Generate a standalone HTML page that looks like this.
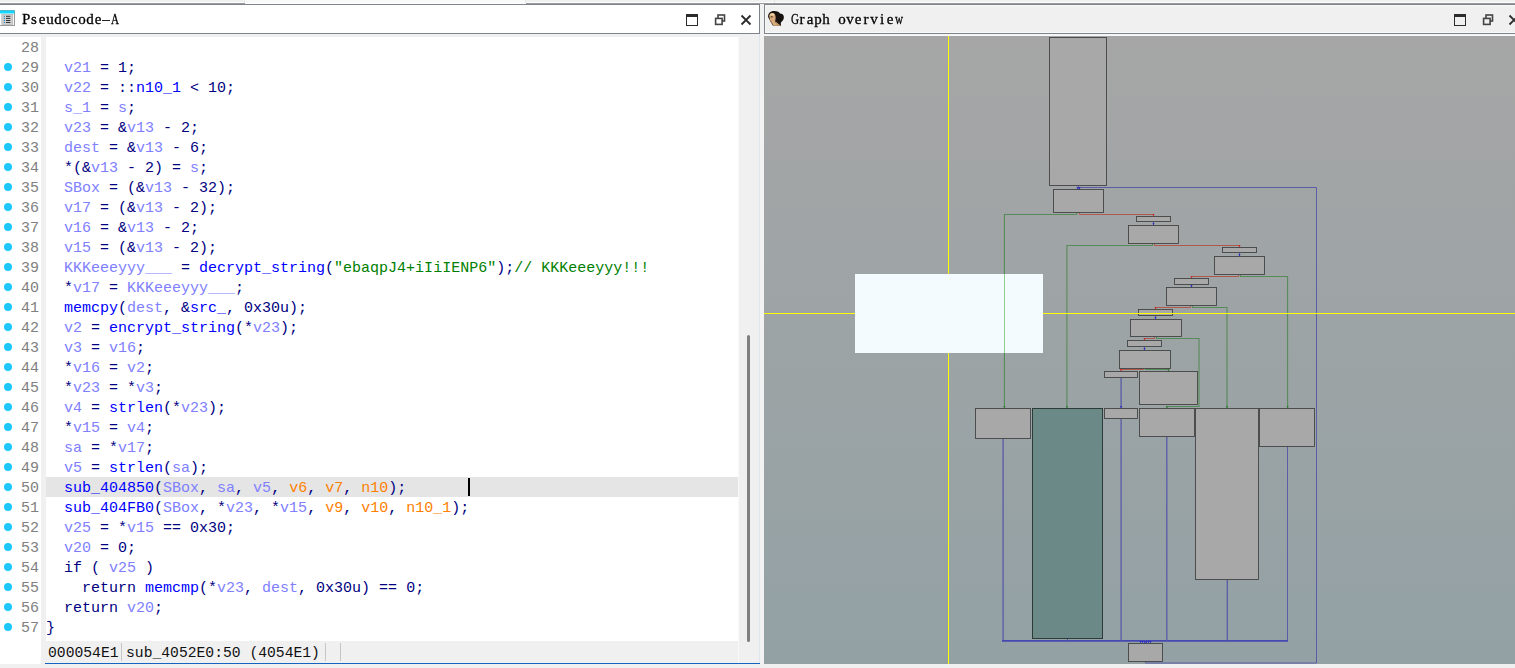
<!DOCTYPE html>
<html>
<head>
<meta charset="utf-8">
<title>Pseudocode-A</title>
<style>
html,body{margin:0;padding:0;}
body{width:1515px;height:668px;overflow:hidden;background:#f0f0f0;position:relative;font-family:"Liberation Mono",monospace;}
.abs{position:absolute;}
/* top strip */
#topstrip{left:0;top:0;width:1515px;height:4px;background:#f0f0f0;}
#toptab{left:245px;top:0;width:281px;height:4px;background:#f9f9f9;border-bottom:0;box-shadow:inset 0 -1px 0 #fff;}
/* headers */
#hdrL{left:0;top:4px;width:759px;height:29px;background:#fff;border-top:1px solid #7f838a;border-bottom:1px solid #7f838a;border-right:1px solid #7f838a;box-sizing:content-box;height:28px;}
#hdrR{left:764px;top:4px;width:751px;height:28px;background:#f0f0f0;box-shadow:inset 0 0 0 1px #f9f9f9;border-top:1px solid #7f838a;border-bottom:1px solid #7f838a;border-left:1px solid #7f838a;}
.title{font-family:"Liberation Serif",serif;font-size:15px;color:#000;line-height:20px;white-space:nowrap;will-change:transform;}
.title b{-webkit-text-stroke:0.3px #000;display:inline-block;width:8px;text-align:center;font-weight:normal;}
.title b.w{transform:scaleX(.74);}
/* code */
#gutter{left:0;top:37px;width:41px;height:627px;background:#fff;}
#codebg{left:46px;top:37px;width:692px;height:604px;background:#fff;}
#track{left:738px;top:37px;width:21px;height:626px;background:#f0f0f0;border-left:1px solid #f8f8f8;box-sizing:border-box;}
#thumb{left:747px;top:335px;width:3px;height:307px;background:#808080;border-radius:2px;}
#code{left:0;top:37px;width:739px;}
.ln{position:relative;height:20px;line-height:24px;white-space:pre;font-size:15px;}
.ln.hl .code{background:#e5e5e5;}
.num{position:absolute;left:21px;top:0;color:#808080;}
.code{position:absolute;left:46px;top:0;width:692px;height:20px;}
.dot{position:absolute;left:3.7px;top:5.7px;width:8.6px;height:8.6px;border-radius:50%;background:#1ec8ff;}
.v{color:#8080ff}.f{color:#0000ff}.g{color:#0000ff}.p{color:#000080}.s{color:#008000}.o{color:#ff8000}
#caret{left:468px;top:478px;width:2px;height:18px;background:#000;}
/* status */
#status{left:46px;top:641px;width:692px;height:22px;background:#f0f0f0;font-size:14.7px;line-height:24px;color:#111;white-space:pre;}
.sep{position:absolute;top:2px;width:1px;height:18px;background:#c6c6c6;}
#blueline{left:45px;top:662.6px;width:715px;height:1.3px;background:#1565c0;}
#splitter{left:760px;top:4px;width:4px;height:660px;background:#f2f2f2;}
#splitln{left:759px;top:34px;width:1px;height:630px;background:#dfe5ee;}
</style>
</head>
<body>
<div class="abs" id="topstrip"></div>
<div class="abs" style="left:0;top:2px;width:1515px;height:1px;background:#fdfdfd;"></div>
<div class="abs" style="left:0;top:3px;width:1515px;height:1px;background:#9a9a9a;"></div>
<div class="abs" id="toptab"></div>
<div class="abs" style="left:244px;top:0;width:1px;height:3px;background:#e6e6e6;"></div>
<div class="abs" style="left:525px;top:0;width:1px;height:3px;background:#e6e6e6;"></div>
<div class="abs" style="left:774px;top:0;width:1px;height:3px;background:#e6e6e6;"></div>

<div class="abs" id="hdrL"></div>
<div class="abs" id="hdrR"></div>
<div class="abs" style="left:764px;top:34px;width:751px;height:2px;background:#f6f6f6;"></div>
<div class="abs" id="splitter"></div>
<div class="abs" id="splitln"></div>
<div class="abs title" style="left:22px;top:9px;"><b>P</b><b>s</b><b>e</b><b>u</b><b>d</b><b>o</b><b>c</b><b>o</b><b>d</b><b>e</b><b>–</b><b class="w">A</b></div>
<div class="abs title" style="left:790px;top:9px;"><b class="w">G</b><b>r</b><b>a</b><b>p</b><b>h</b><b>&nbsp;</b><b>o</b><b>v</b><b>e</b><b>r</b><b>v</b><b>i</b><b>e</b><b class="w">w</b></div>

<div class="abs" id="gutter"></div>
<div class="abs" id="codebg"></div>
<div class="abs" id="track"></div>
<div class="abs" id="thumb"></div>
<div class="abs" id="code">
<div class="ln"><span class="num">28</span><span class="code"></span></div>
<div class="ln"><i class="dot"></i><span class="num">29</span><span class="code">  <span class="v">v21</span><span class="p"> = 1;</span></span></div>
<div class="ln"><i class="dot"></i><span class="num">30</span><span class="code">  <span class="v">v22</span><span class="p"> = ::</span><span class="g">n10_1</span><span class="p"> &lt; 10;</span></span></div>
<div class="ln"><i class="dot"></i><span class="num">31</span><span class="code">  <span class="v">s_1</span><span class="p"> = </span><span class="v">s</span><span class="p">;</span></span></div>
<div class="ln"><i class="dot"></i><span class="num">32</span><span class="code">  <span class="v">v23</span><span class="p"> = &amp;</span><span class="v">v13</span><span class="p"> - 2;</span></span></div>
<div class="ln"><i class="dot"></i><span class="num">33</span><span class="code">  <span class="v">dest</span><span class="p"> = &amp;</span><span class="v">v13</span><span class="p"> - 6;</span></span></div>
<div class="ln"><i class="dot"></i><span class="num">34</span><span class="code">  <span class="p">*(&amp;</span><span class="v">v13</span><span class="p"> - 2) = </span><span class="v">s</span><span class="p">;</span></span></div>
<div class="ln"><i class="dot"></i><span class="num">35</span><span class="code">  <span class="v">SBox</span><span class="p"> = (&amp;</span><span class="v">v13</span><span class="p"> - 32);</span></span></div>
<div class="ln"><i class="dot"></i><span class="num">36</span><span class="code">  <span class="v">v17</span><span class="p"> = (&amp;</span><span class="v">v13</span><span class="p"> - 2);</span></span></div>
<div class="ln"><i class="dot"></i><span class="num">37</span><span class="code">  <span class="v">v16</span><span class="p"> = &amp;</span><span class="v">v13</span><span class="p"> - 2;</span></span></div>
<div class="ln"><i class="dot"></i><span class="num">38</span><span class="code">  <span class="v">v15</span><span class="p"> = (&amp;</span><span class="v">v13</span><span class="p"> - 2);</span></span></div>
<div class="ln"><i class="dot"></i><span class="num">39</span><span class="code">  <span class="v">KKKeeeyyy___</span><span class="p"> = </span><span class="f">decrypt_string</span><span class="p">(</span><span class="s">"ebaqpJ4+iIiIENP6"</span><span class="p">);</span><span class="s">// KKKeeeyyy!!!</span></span></div>
<div class="ln"><i class="dot"></i><span class="num">40</span><span class="code">  <span class="p">*</span><span class="v">v17</span><span class="p"> = </span><span class="v">KKKeeeyyy___</span><span class="p">;</span></span></div>
<div class="ln"><i class="dot"></i><span class="num">41</span><span class="code">  <span class="f">memcpy</span><span class="p">(</span><span class="v">dest</span><span class="p">, &amp;</span><span class="g">src_</span><span class="p">, 0x30u);</span></span></div>
<div class="ln"><i class="dot"></i><span class="num">42</span><span class="code">  <span class="v">v2</span><span class="p"> = </span><span class="f">encrypt_string</span><span class="p">(*</span><span class="v">v23</span><span class="p">);</span></span></div>
<div class="ln"><i class="dot"></i><span class="num">43</span><span class="code">  <span class="v">v3</span><span class="p"> = </span><span class="v">v16</span><span class="p">;</span></span></div>
<div class="ln"><i class="dot"></i><span class="num">44</span><span class="code">  <span class="p">*</span><span class="v">v16</span><span class="p"> = </span><span class="v">v2</span><span class="p">;</span></span></div>
<div class="ln"><i class="dot"></i><span class="num">45</span><span class="code">  <span class="p">*</span><span class="v">v23</span><span class="p"> = *</span><span class="v">v3</span><span class="p">;</span></span></div>
<div class="ln"><i class="dot"></i><span class="num">46</span><span class="code">  <span class="v">v4</span><span class="p"> = </span><span class="f">strlen</span><span class="p">(*</span><span class="v">v23</span><span class="p">);</span></span></div>
<div class="ln"><i class="dot"></i><span class="num">47</span><span class="code">  <span class="p">*</span><span class="v">v15</span><span class="p"> = </span><span class="v">v4</span><span class="p">;</span></span></div>
<div class="ln"><i class="dot"></i><span class="num">48</span><span class="code">  <span class="v">sa</span><span class="p"> = *</span><span class="v">v17</span><span class="p">;</span></span></div>
<div class="ln"><i class="dot"></i><span class="num">49</span><span class="code">  <span class="v">v5</span><span class="p"> = </span><span class="f">strlen</span><span class="p">(</span><span class="v">sa</span><span class="p">);</span></span></div>
<div class="ln hl"><i class="dot"></i><span class="num">50</span><span class="code">  <span class="f">sub_404850</span><span class="p">(</span><span class="v">SBox</span><span class="p">, </span><span class="v">sa</span><span class="p">, </span><span class="v">v5</span><span class="p">, </span><span class="o">v6</span><span class="p">, </span><span class="o">v7</span><span class="p">, </span><span class="o">n10</span><span class="p">);</span></span></div>
<div class="ln"><i class="dot"></i><span class="num">51</span><span class="code">  <span class="f">sub_404FB0</span><span class="p">(</span><span class="v">SBox</span><span class="p">, *</span><span class="v">v23</span><span class="p">, *</span><span class="v">v15</span><span class="p">, </span><span class="o">v9</span><span class="p">, </span><span class="o">v10</span><span class="p">, </span><span class="o">n10_1</span><span class="p">);</span></span></div>
<div class="ln"><i class="dot"></i><span class="num">52</span><span class="code">  <span class="v">v25</span><span class="p"> = *</span><span class="v">v15</span><span class="p"> == 0x30;</span></span></div>
<div class="ln"><i class="dot"></i><span class="num">53</span><span class="code">  <span class="v">v20</span><span class="p"> = 0;</span></span></div>
<div class="ln"><i class="dot"></i><span class="num">54</span><span class="code">  <span class="p">if ( </span><span class="v">v25</span><span class="p"> )</span></span></div>
<div class="ln"><i class="dot"></i><span class="num">55</span><span class="code">  <span class="p">  return </span><span class="f">memcmp</span><span class="p">(*</span><span class="v">v23</span><span class="p">, </span><span class="v">dest</span><span class="p">, 0x30u) == 0;</span></span></div>
<div class="ln"><i class="dot"></i><span class="num">56</span><span class="code">  <span class="p">return </span><span class="v">v20</span><span class="p">;</span></span></div>
<div class="ln"><i class="dot"></i><span class="num">57</span><span class="code"><span class="p">}</span></span></div>
</div>
<div class="abs" id="caret"></div>
<div class="abs" id="status"><span style="position:absolute;left:2px;">000054E1</span><span style="position:absolute;left:80px;">sub_4052E0:50 (4054E1)</span><i class="sep" style="left:75px"></i><i class="sep" style="left:279px"></i><i class="sep" style="left:294px"></i></div>
<div class="abs" id="blueline"></div>

<svg class="abs" style="left:0;top:0" width="1515" height="668" viewBox="0 0 1515 668">
<defs>
<linearGradient id="gbg" x1="0" y1="0" x2="0" y2="1"><stop offset="0" stop-color="#a6a6a6"/><stop offset="1" stop-color="#93a1a5"/></linearGradient>
<style>
.bk{fill:#a8a8a8;stroke:#444;stroke-width:.9}
.bkt{fill:#6b8986;stroke:#2c3a38;stroke-width:1}
.eg{fill:none;stroke:#578a59;stroke-width:1.1}
.er{fill:none;stroke:#b0584e;stroke-width:1}
.eb{fill:none;stroke:#5b5ea6;stroke-width:1}
.eb3{fill:none;stroke:#5b5ea6;stroke-width:1.35}
.eb2{fill:none;stroke:#4648b2;stroke-width:1.7}
</style>
</defs>
<!-- graph bg -->
<rect x="764" y="36" width="751" height="628" fill="url(#gbg)"/>
<g>
<polyline class="eb" points="1078.5,185.5 1078.5,189.5"/>
<polyline class="eb" points="1145.5,661.5 1145.5,663 1316.5,663 1316.5,187.5 1079.5,187.5 1079.5,189.5"/>
<polyline class="eg" points="1077.5,212.5 1076.5,214.5 1004.4,214.5 1004.4,408.5"/>
<polyline class="er" points="1079.5,212.5 1079.5,214.5 1153.5,214.5 1153.5,216.5"/>
<polyline class="eb" points="1153.5,221.5 1153.5,225.5"/>
<polyline class="eg" points="1152.5,243.5 1152.5,245.5 1066.9,245.5 1066.9,408.5"/>
<polyline class="er" points="1154.5,243.5 1154.5,245.5 1239.5,245.5 1239.5,247.5"/>
<polyline class="eb" points="1239.5,252.5 1239.5,256.5"/>
<polyline class="er" points="1238.5,274.5 1238.5,276.5 1191.5,276.5 1191.5,278.5"/>
<polyline class="eg" points="1240.5,274.5 1240.5,276.5 1287.6,276.5 1287.6,408.5"/>
<polyline class="eb" points="1191.5,284.5 1191.5,287.5"/>
<polyline class="er" points="1190.5,305.5 1190.5,307.5 1155.5,307.5 1155.5,309.5"/>
<polyline class="eg" points="1192.5,305.5 1192.5,307.5 1227,307.5 1227,408.5"/>
<polyline class="eb" points="1155.5,315.5 1155.5,319.5"/>
<polyline class="er" points="1154.5,336.5 1154.5,338.5 1144.5,338.5 1144.5,340.5"/>
<polyline class="eg" points="1156.5,336.5 1156.5,338.5 1199,338.5 1199,406.5 1166.9,406.5 1166.9,408.5"/>
<polyline class="eb" points="1144.5,346.5 1144.5,350.5"/>
<polyline class="er" points="1143.5,368.5 1143.5,369.5 1121,369.5 1121,371.5"/>
<polyline class="eg" points="1145.5,368.5 1145.5,369.5 1168.5,369.5 1168.5,371.5"/>
<polyline class="eb3" points="1121.1,377.5 1121.1,408.5"/>
<polyline class="eb3" points="1003.1,438.5 1003.1,640.8"/>
<polyline class="eb" points="1287.5,640.8 1287.5,446.5"/>
<polyline class="eb2" points="1002,640.8 1288,640.8"/>
<polyline class="eb" points="1067.5,638.5 1067.5,640.5"/>
<polyline class="eb3" points="1121.1,418.5 1121.1,640.5"/>
<polyline class="eb3" points="1166.8,436.5 1166.8,640.5"/>
<polyline class="eb3" points="1227.3,579.5 1227.3,640.5"/>
<polyline class="eb" points="1145.5,640.5 1145.5,643.5"/>
</g>
<g>
<rect class="bk" x="1049.5" y="37.5" width="57" height="148"/>
<rect class="bk" x="1053.5" y="189.5" width="50" height="23"/>
<rect class="bk" x="1136.5" y="216.5" width="34" height="5"/>
<rect class="bk" x="1128.5" y="225.5" width="50" height="18"/>
<rect class="bk" x="1222.5" y="247.5" width="34" height="5"/>
<rect class="bk" x="1214.5" y="256.5" width="50" height="18"/>
<rect class="bk" x="1174.5" y="278.5" width="34" height="6"/>
<rect class="bk" x="1166.5" y="287.5" width="50" height="18"/>
<rect class="bk" x="1138.5" y="309.5" width="34" height="6"/>
<rect class="bk" x="1130.5" y="319.5" width="51" height="17"/>
<rect class="bk" x="1127.5" y="340.5" width="34" height="6"/>
<rect class="bk" x="1119.5" y="350.5" width="51" height="18"/>
<rect class="bk" x="1104.5" y="371.5" width="33" height="6"/>
<rect class="bk" x="1139.5" y="371.5" width="58" height="33"/>
<rect class="bk" x="975.5" y="408.5" width="55" height="30"/>
<rect class="bkt" x="1032.5" y="408.5" width="70" height="230"/>
<rect class="bk" x="1104.5" y="408.5" width="33" height="10"/>
<rect class="bk" x="1139.5" y="408.5" width="55" height="28"/>
<rect class="bk" x="1195.5" y="408.5" width="63" height="171"/>
<rect class="bk" x="1259.5" y="408.5" width="55" height="38"/>
<rect class="bk" x="1128.5" y="643.5" width="34" height="18"/>
</g>
<g>
<path d="M1077.5 189.5 l-1 -2.6 h2 z" fill="#2a2ac4"/>
<path d="M1079.5 189.5 l-1 -2.6 h2 z" fill="#2a2ac4"/>
<path d="M1004.4 408.5 l-1 -2.6 h2 z" fill="#2c7c2c"/>
<path d="M1153.5 216.5 l-1 -2.6 h2 z" fill="#c42a2a"/>
<path d="M1153.5 225.5 l-1 -2.6 h2 z" fill="#2a2ac4"/>
<path d="M1066.9 408.5 l-1 -2.6 h2 z" fill="#2c7c2c"/>
<path d="M1239.5 247.5 l-1 -2.6 h2 z" fill="#c42a2a"/>
<path d="M1239.5 256.5 l-1 -2.6 h2 z" fill="#2a2ac4"/>
<path d="M1191.5 278.5 l-1 -2.6 h2 z" fill="#c42a2a"/>
<path d="M1287.6 408.5 l-1 -2.6 h2 z" fill="#2c7c2c"/>
<path d="M1191.5 287.5 l-1 -2.6 h2 z" fill="#2a2ac4"/>
<path d="M1155.5 309.5 l-1 -2.6 h2 z" fill="#c42a2a"/>
<path d="M1227 408.5 l-1 -2.6 h2 z" fill="#2c7c2c"/>
<path d="M1155.5 319.5 l-1 -2.6 h2 z" fill="#2a2ac4"/>
<path d="M1144.5 340.5 l-1 -2.6 h2 z" fill="#c42a2a"/>
<path d="M1166.9 408.5 l-1 -2.6 h2 z" fill="#2c7c2c"/>
<path d="M1144.5 350.5 l-1 -2.6 h2 z" fill="#2a2ac4"/>
<path d="M1121 371.5 l-1 -2.6 h2 z" fill="#c42a2a"/>
<path d="M1168.5 371.5 l-1 -2.6 h2 z" fill="#2c7c2c"/>
<path d="M1121.1 408.5 l-1 -2.6 h2 z" fill="#2a2ac4"/>
<path d="M1140.5 643.5 l-1 -2.6 h2 z" fill="#2a2ac4"/>
<path d="M1142.5 643.5 l-1 -2.6 h2 z" fill="#2a2ac4"/>
<path d="M1144.5 643.5 l-1 -2.6 h2 z" fill="#2a2ac4"/>
<path d="M1146.5 643.5 l-1 -2.6 h2 z" fill="#2a2ac4"/>
<path d="M1148.5 643.5 l-1 -2.6 h2 z" fill="#2a2ac4"/>
<path d="M1150.5 643.5 l-1 -2.6 h2 z" fill="#2a2ac4"/>
</g>
<!-- crosshair -->
<rect x="948" y="36" width="1" height="628" fill="#ffff00"/>
<rect x="764" y="313" width="751" height="1" fill="#ffff00"/>
<!-- visible window -->
<rect x="855" y="274" width="188" height="79" fill="#f3fbfe"/>
<rect x="1004" y="274" width="1" height="79" fill="#8fd08f"/>

<!-- header icons: left panel -->
<g id="icoL" fill="none" stroke="#2b2b2b">
 <rect x="686.5" y="15.5" width="11" height="10" stroke-width="1"/>
 <rect x="686" y="14" width="12" height="3" fill="#2b2b2b" stroke="none"/>
 <rect x="718" y="15" width="6.5" height="6" stroke="#444" stroke-width="1.6"/>
 <rect x="715.6" y="18.4" width="6.5" height="6" fill="#fff" stroke="#444" stroke-width="1.6"/>
 <path d="M741.5 15.5 L750.5 24.5 M750.5 15.5 L741.5 24.5" stroke-width="1.8"/>
</g>
<g id="icoR" fill="none" stroke="#2b2b2b">
 <rect x="1454.5" y="15.5" width="11" height="10" stroke-width="1"/>
 <rect x="1454" y="14" width="12" height="3" fill="#2b2b2b" stroke="none"/>
 <rect x="1486" y="15" width="6.5" height="6" stroke="#444" stroke-width="1.6"/>
 <rect x="1483.6" y="18.4" width="6.5" height="6" fill="#f0f0f0" stroke="#444" stroke-width="1.6"/>
 <path d="M1509.5 15.5 L1518.5 24.5 M1518.5 15.5 L1509.5 24.5" stroke-width="1.8"/>
</g>
<!-- pseudocode icon -->
<g id="icoP">
 <rect x="-2" y="10.5" width="16.5" height="15" fill="#fff" stroke="#9a9a9a" stroke-width="1"/>
 <rect x="-2" y="10.5" width="16.5" height="3" fill="#12d6ff"/>
 <rect x="1.8" y="14.4" width="11" height="10.2" fill="#cfcfcf" stroke="#a9a9a9" stroke-width="0.6"/>
 <g fill="#1c86c8"><rect x="3.8" y="15.8" width="1.2" height="1"/><rect x="3.8" y="17.9" width="1.2" height="1"/><rect x="3.8" y="20" width="1.2" height="1"/><rect x="3.8" y="22" width="1.2" height="1"/></g>
 <g fill="#333"><rect x="6" y="15.8" width="4.4" height="1"/><rect x="6" y="17.9" width="4.4" height="1"/><rect x="6" y="20" width="4.4" height="1"/><rect x="6" y="22" width="4.4" height="1"/></g>
</g>
<!-- graph overview icon (portrait) -->
<g id="icoG">
 <path d="M768.3 17.6 C767.4 13.6 770.4 10.9 774.4 11 C777.6 11 779.2 12.2 780 13.6 C783 13.4 784.6 16.4 783.6 19 C783 21 781.2 21.6 780.8 23 L781 25.8 L773 25.8 L771 22.4 Z" fill="#18120f"/>
 <path d="M769.2 15.7 C769.4 14.2 770.2 13.4 771.4 13.2 C772.8 13 774.2 13.2 774.8 13.9 C775.5 15.4 775.8 17.4 775.6 18.8 C775.5 19.9 775.2 20.9 774.9 21.6 C776.6 22.6 779.2 24.2 780.3 25.8 L773.3 25.8 C773 24.6 772.4 23.4 771.5 22.6 C770.7 22.2 770.3 21.5 770.4 20.8 L769.6 19.2 C769.9 18.6 769.6 17.6 769.2 15.7 Z" fill="#d9aa7c"/>
 <path d="M770.4 13.8 C771.6 13 773.4 13 774.2 13.8 L773.6 15.4 L770.6 15.4 Z" fill="#f1d9a6"/>
 <ellipse cx="771.8" cy="16.8" rx="1.1" ry="0.6" fill="#3a2415"/>
 <ellipse cx="771" cy="21.2" rx="0.7" ry="0.45" fill="#b23a34"/>
 <ellipse cx="775.6" cy="22.6" rx="0.9" ry="0.7" fill="#f4ead8"/>
 <path d="M774.9 21.6 C776.6 22.6 779.2 24.2 780.3 25.8 L778 25.8 C777 24.4 775.6 23 774.4 22.6 Z" fill="#b98d5e"/>
</g>
</svg>
</body>
</html>
